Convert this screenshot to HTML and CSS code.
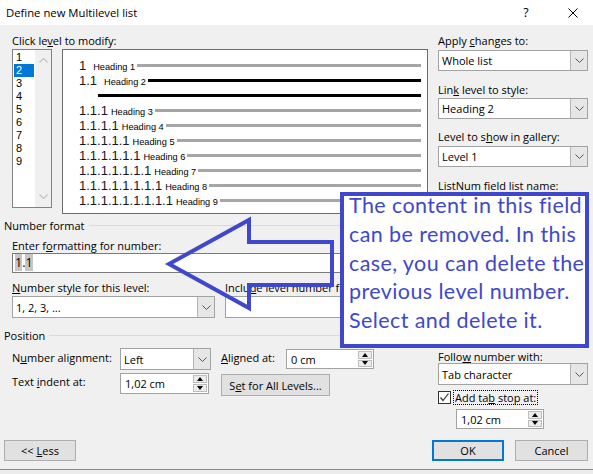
FILE: index.html
```html
<!DOCTYPE html>
<html>
<head>
<meta charset="utf-8">
<title>Define new Multilevel list</title>
<link rel="stylesheet" href="styles.css">
</head>
<body>
<div class="dialog">
  <div class="titlebar">
    <span class="title">Define new Multilevel list</span>
    <span class="tb-help">?</span>
    <span class="tb-close"><svg width="10" height="10" viewBox="0 0 10 10"><path d="M0.5 0.5L9.5 9.5M9.5 0.5L0.5 9.5" stroke="#000" stroke-width="1" fill="none"/></svg></span>
  </div>

  <div class="content">
    <div class="left">
      <div class="label lbl-click">Click le<u>v</u>el to modify:</div>
      <div class="levels-row">
        <div class="listbox">
          <div class="items">
            <div class="item">1</div>
            <div class="item sel">2</div>
            <div class="item">3</div>
            <div class="item">4</div>
            <div class="item">5</div>
            <div class="item">6</div>
            <div class="item">7</div>
            <div class="item">8</div>
            <div class="item">9</div>
          </div>
          <div class="vscroll">
            <svg width="9" height="5" viewBox="0 0 9 5"><path d="M0.5 4.5L4.5 0.5L8.5 4.5" stroke="#c2c2c2" stroke-width="1.2" fill="none"/></svg>
            <svg width="9" height="5" viewBox="0 0 9 5"><path d="M0.5 0.5L4.5 4.5L8.5 0.5" stroke="#c2c2c2" stroke-width="1.2" fill="none"/></svg>
          </div>
        </div>
        <div class="preview">
          <div class="prow"><span class="pnum">1</span><span class="plbl wide">Heading 1</span><span class="pline"></span></div>
          <div class="prow"><span class="pnum">1.1</span><span class="plbl wide">Heading 2</span><span class="pline dark"></span></div>
          <div class="prow pbody"><span class="pline dark"></span></div>
          <div class="prow"><span class="pnum">1.1.1</span><span class="plbl">Heading 3</span><span class="pline"></span></div>
          <div class="prow"><span class="pnum">1.1.1.1</span><span class="plbl">Heading 4</span><span class="pline"></span></div>
          <div class="prow"><span class="pnum">1.1.1.1.1</span><span class="plbl">Heading 5</span><span class="pline"></span></div>
          <div class="prow"><span class="pnum">1.1.1.1.1.1</span><span class="plbl">Heading 6</span><span class="pline"></span></div>
          <div class="prow"><span class="pnum">1.1.1.1.1.1.1</span><span class="plbl">Heading 7</span><span class="pline"></span></div>
          <div class="prow"><span class="pnum">1.1.1.1.1.1.1.1</span><span class="plbl">Heading 8</span><span class="pline"></span></div>
          <div class="prow"><span class="pnum">1.1.1.1.1.1.1.1.1</span><span class="plbl">Heading 9</span><span class="pline"></span></div>
        </div>
      </div>

      <div class="section sec-num"><span>Number format</span></div>
      <div class="indent">
        <div class="label lbl-fmt">Enter f<u>o</u>rmatting for number:</div>
        <div class="textbox fmt"><span class="fld">1</span>.<span class="fld">1</span></div>
        <div class="pair">
          <div class="col">
            <div class="label"><u>N</u>umber style for this level:</div>
            <div class="select sel-style"><span class="val">1, 2, 3, ...</span><span class="dd"><svg width="9" height="5" viewBox="0 0 9 5"><path d="M0.5 0.5L4.5 4.5L8.5 0.5" stroke="#555" stroke-width="1" fill="none"/></svg></span></div>
          </div>
          <div class="col">
            <div class="label">Inclu<u>d</u>e level number from:</div>
            <div class="select sel-style"><span class="val"></span><span class="dd"><svg width="9" height="5" viewBox="0 0 9 5"><path d="M0.5 0.5L4.5 4.5L8.5 0.5" stroke="#555" stroke-width="1" fill="none"/></svg></span></div>
          </div>
        </div>
      </div>

      <div class="section sec-pos"><span>Position</span></div>
      <div class="pos-grid">
        <div class="label plabel">N<u>u</u>mber alignment:</div>
        <div class="select sel-align"><span class="val">Left</span><span class="dd"><svg width="9" height="5" viewBox="0 0 9 5"><path d="M0.5 0.5L4.5 4.5L8.5 0.5" stroke="#555" stroke-width="1" fill="none"/></svg></span></div>
        <div class="label plabel"><u>A</u>ligned at:</div>
        <div class="spin spin-aligned"><span class="val">0 cm</span><span class="spin-btns"><span class="sb"><i class="tri up"></i></span><span class="sb"><i class="tri down"></i></span></span></div>
        <div class="label plabel p2">Text <u>i</u>ndent at:</div>
        <div class="spin spin-indent"><span class="val">1,02 cm</span><span class="spin-btns"><span class="sb"><i class="tri up"></i></span><span class="sb"><i class="tri down"></i></span></span></div>
        <div class="btn btn-all"><span>S<u>e</u>t for All Levels...</span></div>
      </div>
    </div>

    <div class="right">
      <div class="label r-lbl1">Apply <u>c</u>hanges to:</div>
      <div class="select r-sel1"><span class="val">Whole list</span><span class="dd"><svg width="9" height="5" viewBox="0 0 9 5"><path d="M0.5 0.5L4.5 4.5L8.5 0.5" stroke="#555" stroke-width="1" fill="none"/></svg></span></div>
      <div class="label r-lbl2">Lin<u>k</u> level to style:</div>
      <div class="select r-sel2"><span class="val">Heading 2</span><span class="dd"><svg width="9" height="5" viewBox="0 0 9 5"><path d="M0.5 0.5L4.5 4.5L8.5 0.5" stroke="#555" stroke-width="1" fill="none"/></svg></span></div>
      <div class="label r-lbl3">Level to s<u>h</u>ow in gallery:</div>
      <div class="select r-sel3"><span class="val">Level 1</span><span class="dd"><svg width="9" height="5" viewBox="0 0 9 5"><path d="M0.5 0.5L4.5 4.5L8.5 0.5" stroke="#555" stroke-width="1" fill="none"/></svg></span></div>
      <div class="label r-lbl4">ListNum field list name:</div>
      <div class="textbox r-listnum"></div>
      <div class="label r-lbl5">Follo<u>w</u> number with:</div>
      <div class="select r-sel5"><span class="val">Tab character</span><span class="dd"><svg width="9" height="5" viewBox="0 0 9 5"><path d="M0.5 0.5L4.5 4.5L8.5 0.5" stroke="#555" stroke-width="1" fill="none"/></svg></span></div>
      <div class="check-row">
        <span class="checkbox"><svg width="11" height="11" viewBox="0 0 11 11"><path d="M1.5 5.5L4 8.5L9.5 1.5" stroke="#333" stroke-width="1.2" fill="none"/></svg></span>
        <span class="focus-lbl">Add ta<u>b</u> stop at:</span>
      </div>
      <div class="spin spin-tab"><span class="val">1,02 cm</span><span class="spin-btns"><span class="sb"><i class="tri up"></i></span><span class="sb"><i class="tri down"></i></span></span></div>
    </div>
  </div>

  <div class="buttons">
    <div class="btn btn-less"><span>&lt;&lt; <u>L</u>ess</span></div>
    <div class="btn btn-ok"><span>OK</span></div>
    <div class="btn btn-cancel"><span>Cancel</span></div>
  </div>

  <svg class="arrow" width="180" height="105" viewBox="160 210 180 105"><path d="M169 264L249 220L249 242L332 242L332 285L249 285L249 308Z" stroke="#3f48cc" stroke-width="4" fill="none" stroke-linejoin="miter"/></svg>

  <div class="callout">
    <p>The content in this field can be removed. In this case, you can delete the previous level number. Select and delete it.</p>
  </div>
</div>
</body>
</html>
```

FILE: styles.css
```css
html, body {
  margin: 0;
  padding: 0;
}
body {
  background: #ececec;
  font-family: "Open Sans", "Noto Sans", sans-serif;
  font-size: 11px;
  color: #000;
  width: 593px;
  height: 474px;
  overflow: hidden;
}
u {
  text-decoration-thickness: 1px;
  text-underline-offset: 1px;
}
.dialog {
  position: relative;
  width: 593px;
  height: 470px;
  box-sizing: border-box;
  background: #f0f0f0;
  border-bottom: 1px solid #8a8a8a;
}

/* title bar */
.titlebar {
  height: 25px;
  background: #fff;
  display: flex;
  align-items: center;
  padding-left: 6px;
  padding-right: 10px;
}
.title {
  font-size: 11.3px;
}
.tb-help {
  margin-left: auto;
  width: 20px;
  text-align: center;
  font-size: 12.5px;
}
.tb-close {
  width: 20px;
  margin-left: 27px;
  display: flex;
  justify-content: center;
}

.label {
  height: 15px;
  line-height: 15px;
  white-space: nowrap;
}

.content {
  display: flex;
  gap: 10px;
  padding-left: 4px;
}
.left {
  width: 424px;
}
.right {
  width: 150px;
  display: flex;
  flex-direction: column;
}

.lbl-click {
  margin-top: 8px;
  margin-left: 8px;
}
.levels-row {
  display: flex;
  align-items: flex-start;
  gap: 10px;
  margin-top: 1px;
  margin-left: 8px;
}

/* level listbox */
.listbox {
  width: 40px;
  height: 159px;
  box-sizing: border-box;
  border: 1px solid #828282;
  background: #fff;
  display: flex;
}
.items {
  width: 22px;
  padding-top: 1px;
}
.item {
  height: 13px;
  line-height: 13px;
  margin: 0 1px;
  padding-left: 2px;
  font-family: "Liberation Sans", Arial, sans-serif;
  font-size: 11px;
}
.item.sel {
  background: #0078d7;
  color: #fff;
}
.vscroll {
  width: 16px;
  background: #f0f0f0;
  display: flex;
  flex-direction: column;
  justify-content: space-between;
  align-items: center;
  padding: 8px 0;
  box-sizing: border-box;
}

/* preview */
.preview {
  width: 366px;
  height: 165px;
  box-sizing: border-box;
  border: 1px solid #6d6d6d;
  background: #fff;
  padding: 8px 6px 0 16px;
  font-family: "Liberation Sans", Arial, sans-serif;
}
.prow {
  height: 15px;
  display: flex;
  align-items: baseline;
}
.pnum {
  font-size: 13px;
  line-height: 15px;
  color: #161626;
  white-space: nowrap;
}
.plbl {
  font-size: 9.2px;
  line-height: 15px;
  margin-left: 3px;
  white-space: nowrap;
}
.plbl.wide {
  margin-left: 7px;
}
.pline {
  flex: 1;
  height: 3px;
  background: #a6a6a6;
  margin-left: 2px;
  align-self: center;
}
.pline.dark {
  background: #000;
}
.prow.pbody {
  padding-left: 17px;
}

/* sections */
.section {
  height: 15px;
  line-height: 15px;
  display: flex;
  align-items: center;
}
.section::after {
  content: "";
  flex: 1;
  height: 1px;
  background: #dadada;
  margin-left: 4px;
}
.sec-num {
  margin-top: 4px;
}
.sec-pos {
  margin-top: 10px;
}
.indent {
  padding-left: 8px;
}
.lbl-fmt {
  margin-top: 5px;
}

.textbox {
  box-sizing: border-box;
  border: 1px solid #7a7a7a;
  background: #fff;
  padding-left: 2px;
}
.fmt {
  width: 416px;
  height: 20px;
  line-height: 18px;
  font-size: 12.5px;
}
.fld {
  background: #c6c6c6;
}

.pair {
  display: flex;
  gap: 10px;
  margin-top: 7px;
}
.pair .col {
  width: 203px;
}
.pair .select {
  margin-top: 1px;
}

/* select */
.select {
  box-sizing: border-box;
  display: flex;
  border: 1px solid #a2a2a2;
  background: #fff;
}
.select .val {
  flex: 1;
  padding-left: 3px;
  white-space: nowrap;
  display: flex;
  align-items: center;
}
.select .dd {
  width: 16px;
  background: #e6e6e6;
  border-left: 1px solid #b4b4b4;
  display: flex;
  align-items: center;
  justify-content: center;
}
.sel-style {
  height: 22px;
}

/* spin */
.spin {
  box-sizing: border-box;
  display: flex;
  border: 1px solid #a2a2a2;
  background: #fff;
}
.spin .val {
  flex: 1;
  padding-left: 4px;
  display: flex;
  align-items: center;
  white-space: nowrap;
}
.spin-btns {
  width: 16px;
  display: flex;
  flex-direction: column;
  gap: 1px;
  padding: 1px;
  box-sizing: border-box;
}
.sb {
  flex: 1;
  background: #ececec;
  border: 1px solid #bdbdbd;
  display: flex;
  align-items: center;
  justify-content: center;
}
.tri {
  width: 0;
  height: 0;
  border-left: 3px solid transparent;
  border-right: 3px solid transparent;
}
.tri.up {
  border-bottom: 4px solid #000;
}
.tri.down {
  border-top: 4px solid #000;
}

/* position grid */
.pos-grid {
  display: grid;
  grid-template-columns: 108px 101px 65px 88px;
  grid-template-rows: 22px 23px;
  row-gap: 3px;
  margin-top: 5px;
  padding-left: 8px;
}
.plabel {
  margin-top: 2px;
}
.plabel.p2 {
  margin-top: 1px;
}
.sel-align {
  width: 91px;
  height: 22px;
}
.spin-aligned {
  width: 88px;
  height: 20px;
  margin-top: 1px;
}
.spin-indent {
  width: 89px;
  height: 21px;
}
.btn-all {
  grid-column: 3 / 5;
  width: 109px;
  height: 22px;
  margin-top: 1px;
}

/* buttons */
.btn {
  box-sizing: border-box;
  background: #e1e1e1;
  border: 1px solid #adadad;
  display: flex;
  align-items: center;
  justify-content: center;
  white-space: nowrap;
}

/* right column */
.r-lbl1 { margin-top: 8px; }
.r-sel1 { margin-top: 2px; height: 21px; }
.r-lbl2 { margin-top: 11px; }
.r-sel2 { margin-top: 1px; height: 21px; }
.r-lbl3 { margin-top: 10px; }
.r-sel3 { margin-top: 2px; height: 21px; }
.r-lbl4 { margin-top: 11px; }
.r-listnum { margin-top: 2px; height: 21px; }
.r-lbl5 {
  margin-top: 134px;
  height: 13px;
  line-height: 13px;
}
.r-sel5 { height: 22px; }
.select .val, .spin .val { color: #000; }

.check-row {
  margin-top: 5px;
  height: 15px;
  display: flex;
  align-items: center;
}
.checkbox {
  width: 13px;
  height: 13px;
  box-sizing: border-box;
  border: 1px solid #333;
  background: #fff;
  display: flex;
  align-items: center;
  justify-content: center;
}
.focus-lbl {
  margin-left: 2px;
  height: 15px;
  line-height: 13px;
  box-sizing: border-box;
  border: 1px dotted #000;
  padding: 0 1px;
  white-space: nowrap;
}
.spin-tab {
  margin-top: 4px;
  margin-left: 18px;
  width: 88px;
  height: 20px;
}

.buttons {
  display: flex;
  margin-top: 11px;
  padding-left: 4px;
  padding-right: 5px;
}
.buttons .btn {
  height: 21px;
}
.btn-less {
  width: 72px;
}
.btn-ok {
  width: 72px;
  margin-left: auto;
  border: 2px solid #0078d7;
}
.btn-cancel {
  width: 73px;
  margin-left: 11px;
}

/* overlays */
.arrow {
  position: absolute;
  left: 160px;
  top: 210px;
}
.callout {
  position: absolute;
  left: 340px;
  top: 192px;
  width: 249px;
  height: 156px;
  box-sizing: border-box;
  border: 4px solid #3f48cc;
  background: #fff;
  padding-left: 5px;
  overflow: hidden;
}
.callout p {
  margin: -5px 0 0 0;
  font-family: Lato, "Open Sans", sans-serif;
  font-size: 21.5px;
  letter-spacing: 0.4px;
  line-height: 28.8px;
  color: #3f48cc;
}
```
